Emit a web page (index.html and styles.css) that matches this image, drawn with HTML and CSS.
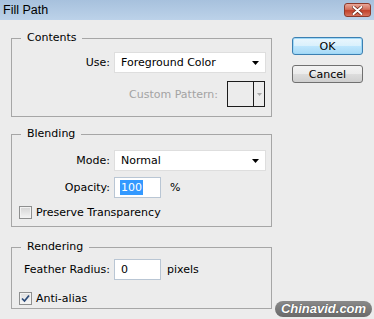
FILE: index.html
```html
<!DOCTYPE html>
<html>
<head>
<meta charset="utf-8">
<title>Fill Path</title>
<link rel="stylesheet" href="styles.css">
</head>
<body>
<div class="window">
  <div class="titlebar">
    <span class="title">Fill Path</span>
    <span class="close">
      <svg width="11" height="9" viewBox="0 0 11 9">
        <path d="M1.5 1 L9.5 8 M9.5 1 L1.5 8" stroke="#6a2418" stroke-width="3.4" stroke-linecap="round"/>
        <path d="M1.5 1 L9.5 8 M9.5 1 L1.5 8" stroke="#fff" stroke-width="2" stroke-linecap="round"/>
      </svg>
    </span>
  </div>

  <div class="main">
    <div class="groups">
      <fieldset class="group group-contents">
        <legend>Contents</legend>
        <div class="row">
          <label>Use:</label>
          <div class="control">
            <div class="select">Foreground Color
              <svg class="arrow" width="7" height="4" viewBox="0 0 7 4"><path d="M0 0 H7 L3.5 4 Z" fill="#000"/></svg>
            </div>
          </div>
        </div>
        <div class="pattern-row">
          <span class="muted">Custom Pattern:</span>
          <div class="pattern">
            <span class="swatch"></span>
            <span class="pattern-drop">
              <svg width="5" height="3" viewBox="0 0 5 3"><path d="M0 0 H5 L2.5 3 Z" fill="#a8a8a8"/></svg>
            </span>
          </div>
        </div>
      </fieldset>

      <fieldset class="group group-blending">
        <legend>Blending</legend>
        <div class="row">
          <label>Mode:</label>
          <div class="control">
            <div class="select">Normal
              <svg class="arrow" width="7" height="4" viewBox="0 0 7 4"><path d="M0 0 H7 L3.5 4 Z" fill="#000"/></svg>
            </div>
          </div>
        </div>
        <div class="row row-tight">
          <label>Opacity:</label>
          <div class="control gap-wide">
            <div class="field"><span class="selected">100</span></div>
            <span>%</span>
          </div>
        </div>
        <div class="check-row">
          <span class="checkbox"></span>
          <span>Preserve Transparency</span>
        </div>
      </fieldset>

      <fieldset class="group group-rendering">
        <legend>Rendering</legend>
        <div class="row">
          <label>Feather Radius:</label>
          <div class="control">
            <div class="field">0</div>
            <span>pixels</span>
          </div>
        </div>
        <div class="check-row check-row-wide">
          <span class="checkbox checked">
            <svg width="11" height="11" viewBox="0 0 11 11"><path d="M2 5.5 L4.5 8 L9 2.5" fill="none" stroke="#2b4a78" stroke-width="1.7"/></svg>
          </span>
          <span>Anti-alias</span>
        </div>
      </fieldset>
    </div>

    <div class="buttons">
      <button class="btn btn-default">OK</button>
      <button class="btn">Cancel</button>
    </div>
  </div>

  <div class="watermark">Chinavid.com</div>
</div>
</body>
</html>
```

FILE: styles.css
```css
*{ margin:0; padding:0; box-sizing:border-box; }
body{
  width:374px;
  height:319px;
  overflow:hidden;
  background:#ececec;
  font-family:"DejaVu Sans", "Liberation Sans", sans-serif;
  font-size:11px;
  color:#000;
}
.window{ position:relative; height:319px; }

/* title bar */
.titlebar{
  height:20px;
  display:flex;
  align-items:center;
  justify-content:space-between;
  padding:0 3px 0 3px;
  background:linear-gradient(#a7c1dd, #bcd2e9);
}
.title{ font-family:"Liberation Sans", sans-serif; font-size:12.5px; }
.close{
  width:27px;
  height:14px;
  margin-right:0;
  display:flex;
  align-items:center;
  justify-content:center;
  border:1px solid #8c3a2c;
  border-radius:3px;
  background:linear-gradient(#e9a899, #d26f5b 45%, #c1412a 55%, #d6735e);
}

/* body */
.main{
  display:flex;
  align-items:flex-start;
  padding:11px 0 0 11px;
}
.groups{ width:261px; }

.group{
  border:1px solid #a6a6a6;
  padding:0 5px 0 0;
  min-width:0;
}
.group legend{
  margin-left:9px;
  padding:0 6px;
  line-height:14px;
}
.group-contents{ padding-top:7px; padding-bottom:9px; }
.group-blending{ margin-top:10px; padding-top:9px; padding-bottom:7px; }
.group-rendering{ margin-top:13px; padding-top:5px; padding-bottom:3px; }

.row{
  display:grid;
  grid-template-columns:98px 1fr;
  column-gap:4px;
  align-items:center;
}
.row label{ text-align:right; }
.row-tight{ margin-top:6px; }
.control{ display:flex; align-items:center; gap:6px; }
.gap-wide{ gap:9px; }

.select{
  width:152px;
  height:21px;
  display:flex;
  align-items:center;
  justify-content:space-between;
  padding:0 6px 0 6px;
  background:#fff;
  border:1px solid #dedede;
}
.arrow{ margin-top:1px; }

.field{
  width:47px;
  height:21px;
  display:flex;
  align-items:center;
  padding-left:6px;
  background:#fff;
  border:1px solid #b9c6d4;
}
.selected{
  margin-left:-1px;
  padding:0 1px;
  line-height:15px;
  background:#3399ff;
  color:#fff;
}

.pattern-row{
  margin-top:8px;
  display:flex;
  justify-content:flex-end;
  align-items:center;
  gap:9px;
  padding-right:1px;
}
.muted{ color:#a3a3a3; }
.pattern{
  width:38px;
  height:26px;
  display:flex;
  border:1px solid #1c1c1c;
}
.swatch{ flex:1; border-right:1px solid #1c1c1c; }
.pattern-drop{
  width:10px;
  display:flex;
  align-items:center;
  justify-content:center;
}

.check-row{
  margin-top:8px;
  display:flex;
  align-items:center;
  gap:4px;
  padding-left:7px;
  height:13px;
}
.check-row-wide{ margin-top:12px; }
.checkbox{
  width:13px;
  height:13px;
  display:flex;
  align-items:center;
  justify-content:center;
  border:1px solid #8e8f8f;
  background:linear-gradient(#d4d4d4, #f4f4f4);
  box-shadow:inset 0 0 0 1px #f2f2f2;
}
.checked{ background:linear-gradient(#dedede, #f7f7f7); }

/* buttons */
.buttons{
  display:flex;
  flex-direction:column;
  gap:10px;
  margin:6px 0 0 20px;
}
.btn{
  width:71px;
  height:18px;
  font-family:"DejaVu Sans", sans-serif;
  font-size:11px;
  color:#000;
  border:1px solid #707070;
  border-radius:3px;
  background:linear-gradient(#f3f3f3, #ebebeb 50%, #dddddd 50%, #cfcfcf);
}
.btn-default{
  border-color:#3c7fb1;
  background:linear-gradient(#eaf6fd, #d9f0fc 50%, #bee6fd 50%, #a7d9f5);
  box-shadow:inset 0 0 0 1px #9ed8f7;
}

/* watermark */
.watermark{
  position:absolute;
  right:2px;
  bottom:2px;
  width:97px;
  height:16px;
  border-radius:8px;
  background:linear-gradient(#8a8a8a, #6a6a6a);
  color:#fff;
  font-family:"Liberation Sans", sans-serif;
  font-size:13px;
  font-weight:bold;
  font-style:italic;
  line-height:16px;
  text-align:center;
  text-shadow:0 0 1px #333;
}
```
